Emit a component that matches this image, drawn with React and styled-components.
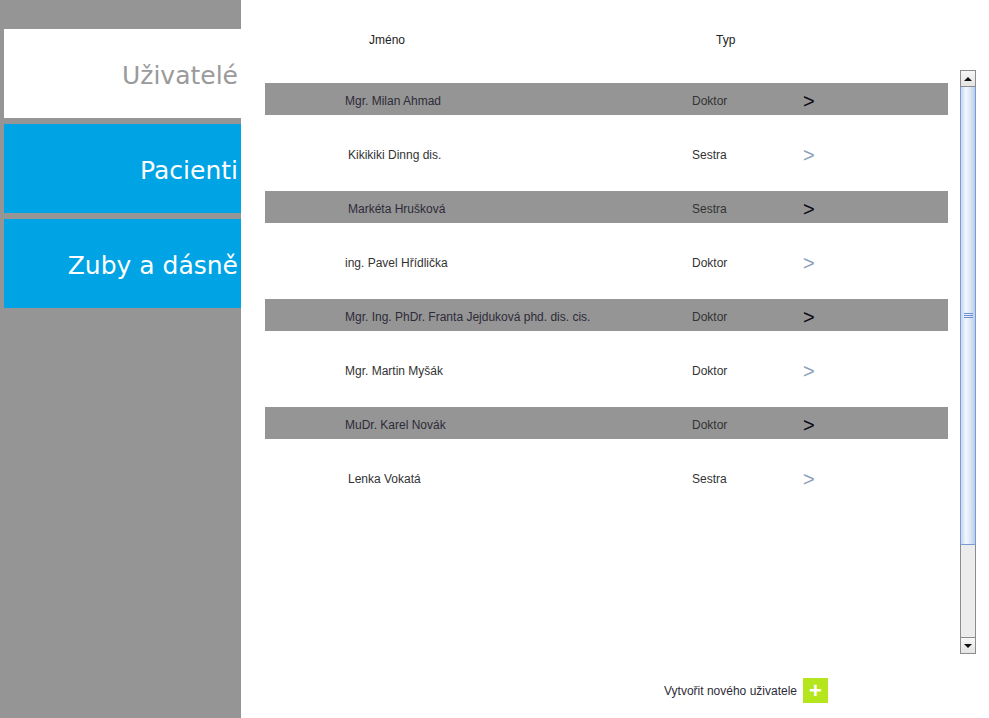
import styled, { createGlobalStyle } from "styled-components"

const Global = createGlobalStyle`
  html, body {
    margin: 0;
    padding: 0;
    background: #ffffff;
  }
  * {
    box-sizing: border-box;
  }
`

const users = [
  { name: "Mgr. Milan Ahmad", type: "Doktor", indent: 80 },
  { name: "Kikikiki Dinng dis.", type: "Sestra", indent: 83 },
  { name: "Markéta Hrušková", type: "Sestra", indent: 83 },
  { name: "ing. Pavel Hřídlička", type: "Doktor", indent: 80 },
  { name: "Mgr. Ing. PhDr. Franta Jejduková phd. dis. cis.", type: "Doktor", indent: 80 },
  { name: "Mgr. Martin Myšák", type: "Doktor", indent: 80 },
  { name: "MuDr. Karel Novák", type: "Doktor", indent: 80 },
  { name: "Lenka Vokatá", type: "Sestra", indent: 83 },
]

const Page = styled.div`
  display: flex;
  width: 989px;
  height: 718px;
  overflow: hidden;
`

const Sidebar = styled.nav`
  width: 241px;
  flex-shrink: 0;
  background: #959595;
  padding: 29px 0 0 4px;
  display: flex;
  flex-direction: column;
  gap: 6px;
`

const Tab = styled.div`
  height: 89px;
  display: flex;
  align-items: center;
  justify-content: flex-end;
  padding: 4px 3px 0 0;
  background: ${p => (p.$active ? "#ffffff" : "#00a3e4")};
  color: ${p => (p.$active ? "#9a9a9a" : "#ffffff")};
  font-family: "DejaVu Sans", Verdana, sans-serif;
  font-size: 25px;
  white-space: nowrap;
`

const Main = styled.main`
  flex: 1;
  display: flex;
  flex-direction: column;
  padding-left: 24px;
  font-family: "Liberation Sans", Arial, sans-serif;
  font-size: 12px;
  color: #333333;
`

const Header = styled.div`
  height: 24px;
  margin-top: 28px;
  display: flex;
  align-items: center;
`

const HeadCell = styled.div`
  width: ${p => p.$w}px;
  padding-left: ${p => p.$pad}px;
  color: #222;
`

const ScrollPane = styled.div`
  margin-top: 18px;
  height: 584px;
  display: flex;
`

const List = styled.div`
  width: 683px;
  padding-top: 13px;
  display: flex;
  flex-direction: column;
`

const Row = styled.div`
  display: flex;
  align-items: center;
  flex-shrink: 0;
  height: ${p => (p.$shaded ? 32 : 76)}px;
  background: ${p => (p.$shaded ? "#959595" : "#ffffff")};
`

const Name = styled.div`
  width: 427px;
  padding-left: ${p => p.$indent}px;
  padding-top: 3px;
  white-space: nowrap;
  color: ${p => (p.$shaded ? "#2e2b38" : "#333")};
`

const Type = styled.div`
  width: 111px;
  padding-top: 3px;
`

const Arrow = styled.div`
  font-family: "Liberation Sans", Arial, sans-serif;
  font-size: 20px;
  line-height: 1;
  padding-top: 4px;
  color: ${p => (p.$shaded ? "#0a0a14" : "#8ea0bb")};
`

const Scrollbar = styled.div`
  margin-left: 12px;
  width: 16px;
  display: flex;
  flex-direction: column;
  background: #ececec;
  border-left: 1px solid #8c8c8c;
  border-right: 1px solid #8c8c8c;
`

const ScrollButton = styled.div`
  height: 17px;
  flex-shrink: 0;
  background: linear-gradient(#f6f6f6, #e4e4e4);
  border-top: 1px solid #8c8c8c;
  border-bottom: 1px solid #8c8c8c;
  display: flex;
  align-items: center;
  justify-content: center;
  &::after {
    content: "";
    border-left: 4px solid transparent;
    border-right: 4px solid transparent;
    ${p => (p.$down ? "border-top: 4px solid #111;" : "border-bottom: 4px solid #111;")}
  }
`

const Thumb = styled.div`
  height: 458px;
  margin: 0 -1px;
  border: 1px solid #7b9ad6;
  border-top: none;
  border-radius: 0 0 2px 2px;
  background: linear-gradient(90deg, #c4d6f0, #f3f7fd 35%, #dce8f7 65%, #b9cdea);
  display: flex;
  align-items: center;
  justify-content: center;
`

const Grip = styled.div`
  width: 9px;
  height: 5px;
  border-top: 1px solid #6d8ed0;
  border-bottom: 1px solid #6d8ed0;
  position: relative;
  &::after {
    content: "";
    position: absolute;
    left: 0;
    right: 0;
    top: 1px;
    border-top: 1px solid #6d8ed0;
  }
`

const Track = styled.div`
  flex: 1;
`

const Footer = styled.div`
  margin-top: 24px;
  height: 25px;
  display: flex;
  align-items: center;
  justify-content: flex-end;
  gap: 6px;
  padding-right: 161px;
  color: #2e2b38;
`

const AddButton = styled.div`
  width: 25px;
  height: 25px;
  background: #b5e61d;
  color: #ffffff;
  display: flex;
  align-items: center;
  justify-content: center;
  font-size: 22px;
  font-weight: bold;
  line-height: 1;
`

const App = () => {
  return (
    <Page>
      <Global />
      <Sidebar>
        <Tab $active>Uživatelé</Tab>
        <Tab>Pacienti</Tab>
        <Tab>Zuby a dásně</Tab>
      </Sidebar>
      <Main>
        <Header>
          <HeadCell $w={451} $pad={104}>Jméno</HeadCell>
          <HeadCell $w={100} $pad={0}>Typ</HeadCell>
        </Header>
        <ScrollPane>
          <List>
            {users.map((u, i) => {
              const shaded = i % 2 === 0
              return (
                <Row key={u.name} $shaded={shaded}>
                  <Name $indent={u.indent} $shaded={shaded}>{u.name}</Name>
                  <Type>{u.type}</Type>
                  <Arrow $shaded={shaded}>&gt;</Arrow>
                </Row>
              )
            })}
          </List>
          <Scrollbar>
            <ScrollButton />
            <Thumb>
              <Grip />
            </Thumb>
            <Track />
            <ScrollButton $down />
          </Scrollbar>
        </ScrollPane>
        <Footer>
          Vytvořit nového uživatele
          <AddButton>+</AddButton>
        </Footer>
      </Main>
    </Page>
  )
}

export default App
